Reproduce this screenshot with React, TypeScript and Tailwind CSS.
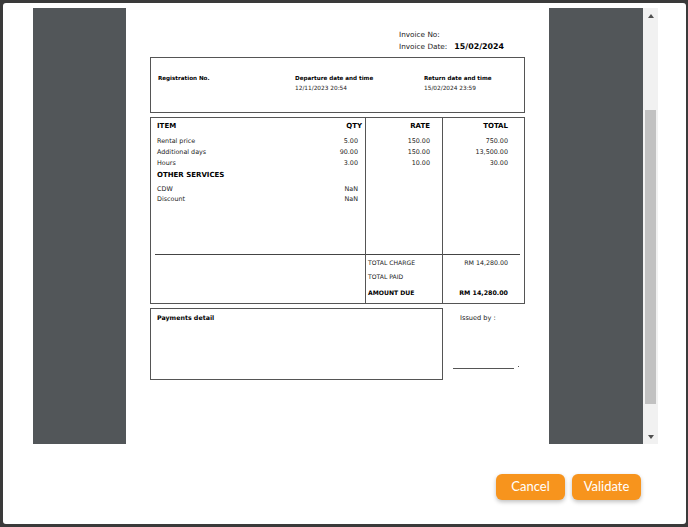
const items = [
  { name: 'Rental price', qty: '5.00', rate: '150.00', total: '750.00' },
  { name: 'Additional days', qty: '90.00', rate: '150.00', total: '13,500.00' },
  { name: 'Hours', qty: '3.00', rate: '10.00', total: '30.00' },
]

const services = [
  { name: 'CDW', qty: 'NaN' },
  { name: 'Discount', qty: 'NaN' },
]

function Invoice() {
  return (
    <div className="h-full w-[423px] bg-white px-[24px] pt-[22px] text-[#222] [font-family:'DejaVu_Sans',Verdana,sans-serif]">
      <div className="ml-[249px] flex flex-col gap-[2px] text-[7.3px] leading-[10px]">
        <div>Invoice No:</div>
        <div className="flex items-center gap-[7px]">
          <span>Invoice Date:</span>
          <span className="text-[7.9px] font-bold text-black">15/02/2024</span>
        </div>
      </div>

      <div className="mt-[5px] grid h-[56px] grid-cols-[137px_129px_1fr] border-[1.5px] border-[#555] pl-[7px] pt-[16px]">
        <div className="text-[5.6px] font-bold leading-[8px] text-black">Registration No.</div>
        <div className="flex flex-col gap-[3px]">
          <span className="text-[5.6px] font-bold leading-[8px] text-black">Departure date and time</span>
          <span className="text-[5.8px] leading-[7px]">12/11/2023 20:54</span>
        </div>
        <div className="flex flex-col gap-[3px]">
          <span className="text-[5.6px] font-bold leading-[8px] text-black">Return date and time</span>
          <span className="text-[5.8px] leading-[7px]">15/02/2024 23:59</span>
        </div>
      </div>

      <div className="mt-[4px] flex h-[187px] border-[1.5px] border-[#555]">
        <div className="flex w-[215px] flex-col border-r-[1.5px] border-[#555]">
          <div className="flex-1 pl-[6px] pr-[3px] pt-[3px]">
            <div className="flex justify-between text-[7px] font-bold leading-[10px] text-black">
              <span>ITEM</span>
              <span>QTY</span>
            </div>
            <div className="mt-[5px] flex flex-col">
              {items.map((it) => (
                <div key={it.name} className="flex justify-between pr-[4px] text-[6.4px] leading-[11px]">
                  <span>{it.name}</span>
                  <span>{it.qty}</span>
                </div>
              ))}
            </div>
            <div className="text-[7px] font-bold leading-[13px] text-black">OTHER SERVICES</div>
            <div className="mt-[1.5px] flex flex-col">
              {services.map((s) => (
                <div key={s.name} className="flex justify-between pr-[4px] text-[6.4px] leading-[10.5px]">
                  <span>{s.name}</span>
                  <span>{s.qty}</span>
                </div>
              ))}
            </div>
          </div>
          <div className="ml-[4px] h-[49px] border-t border-[#444]" />
        </div>

        <div className="flex w-[77px] flex-col border-r-[1.5px] border-[#555]">
          <div className="flex-1 pr-[12px] pt-[3px] text-right">
            <div className="text-[7px] font-bold leading-[10px] text-black">RATE</div>
            <div className="mt-[5px] flex flex-col">
              {items.map((it) => (
                <div key={it.name} className="text-[6.4px] leading-[11px]">{it.rate}</div>
              ))}
            </div>
          </div>
          <div className="flex h-[49px] flex-col border-t border-[#444] pl-[2px] pt-[3px] text-[6.1px]">
            <div className="leading-[10px]">TOTAL CHARGE</div>
            <div className="mt-[4px] leading-[10px]">TOTAL PAID</div>
            <div className="mt-[6px] font-bold leading-[10px] text-black">AMOUNT DUE</div>
          </div>
        </div>

        <div className="flex flex-1 flex-col">
          <div className="flex-1 pr-[16px] pt-[3px] text-right">
            <div className="text-[7px] font-bold leading-[10px] text-black">TOTAL</div>
            <div className="mt-[5px] flex flex-col">
              {items.map((it) => (
                <div key={it.name} className="text-[6.4px] leading-[11px]">{it.total}</div>
              ))}
            </div>
          </div>
          <div className="mr-[4px] flex h-[49px] flex-col border-t border-[#444] pr-[12px] pt-[3px] text-right">
            <div className="text-[6.3px] leading-[10px]">RM 14,280.00</div>
            <div className="mt-[4px] h-[10px]" />
            <div className="mt-[6px] text-[6.3px] font-bold leading-[10px] text-black">RM 14,280.00</div>
          </div>
        </div>
      </div>

      <div className="mt-[4px] flex">
        <div className="h-[72px] w-[293px] border-[1.5px] border-[#555] pl-[6px] pt-[4px] text-[6.3px] font-bold leading-[10px] text-black">
          Payments detail
        </div>
        <div className="flex flex-1 flex-col pl-[10px] pt-[5px]">
          <div className="pl-[7px] text-[6.6px] leading-[10px]">Issued by :</div>
          <div className="mt-[43px] flex items-end gap-[4px]">
            <div className="w-[61px] border-t border-[#555]" />
            <span className="mb-[2px] h-[1px] w-[1px] bg-[#555]" />
          </div>
        </div>
      </div>
    </div>
  )
}

function Scrollbar() {
  return (
    <div className="flex h-full w-[15px] flex-col bg-[#f1f1f1]">
      <div className="flex h-[15px] items-center justify-center">
        <div className="h-0 w-0 border-x-[3.5px] border-b-[4px] border-x-transparent border-b-[#505050]" />
      </div>
      <div className="flex-1 px-[2px] pt-[87px] pb-[25px]">
        <div className="h-full bg-[#c1c1c1]" />
      </div>
      <div className="flex h-[15px] items-center justify-center">
        <div className="h-0 w-0 border-x-[3.5px] border-t-[4px] border-x-transparent border-t-[#505050]" />
      </div>
    </div>
  )
}

export default function App() {
  return (
    <div className="h-[527px] w-[688px] overflow-hidden bg-[#3a3a3a] pb-[3px] pl-[3px] pr-[2px] pt-[3px]">
      <div className="flex h-full flex-col rounded-[3px] bg-white px-[30px] pt-[5px]">
        <div className="flex h-[436px] w-[625px] bg-[#525659]">
          <div className="flex flex-1 pl-[93px]">
            <Invoice />
          </div>
          <Scrollbar />
        </div>
        <div className="mt-[30px] flex justify-end gap-[7px] pr-[15px] [font-family:Lato,'Noto_Sans',sans-serif]">
          <button className="h-[26px] w-[69px] rounded-[6px] bg-[#f7941d] text-[13px] text-white shadow-[0_2px_4px_rgba(0,0,0,0.25)]">
            Cancel
          </button>
          <button className="h-[26px] w-[69px] rounded-[6px] bg-[#f7941d] text-[13px] text-white shadow-[0_2px_4px_rgba(0,0,0,0.25)]">
            Validate
          </button>
        </div>
      </div>
    </div>
  )
}
